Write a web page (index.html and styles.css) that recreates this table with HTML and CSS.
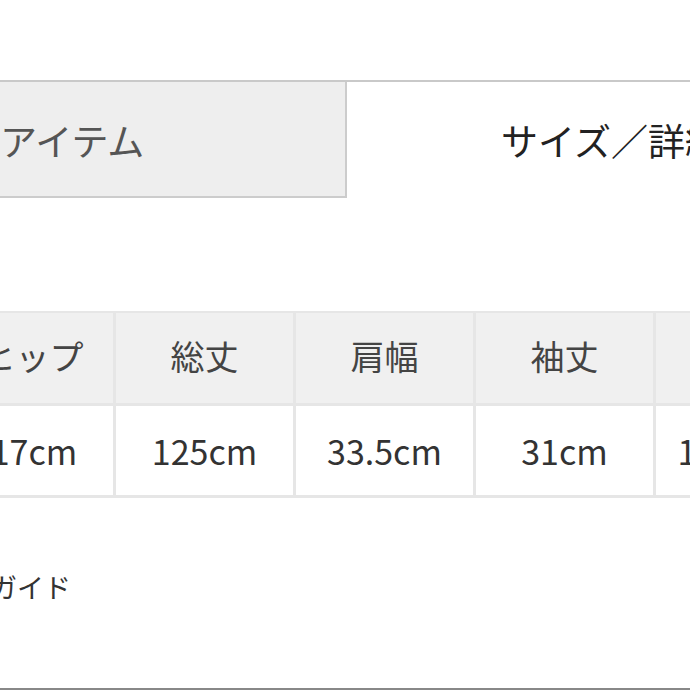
FILE: index.html
```html
<!DOCTYPE html>
<html lang="ja">
<head>
<meta charset="utf-8">
<link rel="stylesheet" href="styles.css">
</head>
<body>
<div class="page">
  <div class="tabs">
    <div class="tab tab-off"><span class="tab-label">アイテム</span></div>
    <div class="tab tab-on"><span class="tab-label">サイズ／詳細</span></div>
  </div>
  <div class="size-table">
    <div class="cell head lead">ヒップ</div>
    <div class="cell head">総丈</div>
    <div class="cell head">肩幅</div>
    <div class="cell head">袖丈</div>
    <div class="cell head">身幅</div>
    <div class="cell">117cm</div>
    <div class="cell">125cm</div>
    <div class="cell">33.5cm</div>
    <div class="cell">31cm</div>
    <div class="cell">115.5cm</div>
  </div>
  <div class="guide"><span class="guide-label">ガイド</span></div>
  <div class="footer-line"></div>
</div>
</body>
</html>
```

FILE: styles.css
```css
html, body {
  margin: 0;
  padding: 0;
  background: #ffffff;
  overflow: hidden;
}
body {
  font-family: "Noto Sans CJK JP", "Noto Sans", sans-serif;
  color: #333;
}
.page {
  width: 690px;
  height: 690px;
  overflow: hidden;
  padding-top: 80px;
  box-sizing: border-box;
  display: flex;
  flex-direction: column;
}
.tabs {
  display: flex;
  border-top: 2px solid #c9c9c9;
  height: 116px;
  flex: none;
}
.tab {
  display: flex;
  align-items: center;
  white-space: nowrap;
  overflow: hidden;
}
.tab-off {
  flex: none;
  width: 345px;
  background: #eeeeee;
  border-right: 2px solid #cccccc;
  border-bottom: 2px solid #cccccc;
  color: #555;
  font-size: 37px;
  height: 114px;
}
.tab-off .tab-label {
  margin-left: 0;
  margin-top: 2px;
}
.tab-on {
  flex: 1;
  min-width: 0;
  height: 114px;
  color: #222;
  font-size: 37px;
}
.tab-on .tab-label {
  margin-left: 154px;
  margin-top: 2px;
}
.size-table {
  margin-top: 113px;
  margin-left: -64px;
  display: grid;
  grid-template-columns: repeat(5, 177px);
  grid-template-rows: 90px 89px;
  gap: 3px;
  padding: 2px 0 3px;
  background: #e6e6e6;
  width: max-content;
  flex: none;
}
.cell {
  background: #ffffff;
  display: flex;
  align-items: center;
  justify-content: center;
  font-size: 34px;
  color: #333;
  white-space: nowrap;
}
.cell.head {
  background: #f0f0f0;
  color: #444;
  padding-bottom: 5px;
}
.cell.head.lead {
  padding-left: 16px;
}
.guide {
  margin-top: 68px;
  height: 40px;
  display: flex;
  align-items: center;
  font-size: 27px;
  color: #333;
  flex: none;
}
.guide-label {
  margin-left: -10px;
}
.footer-line {
  margin-top: auto;
  height: 2px;
  background: #888888;
  flex: none;
}
```
